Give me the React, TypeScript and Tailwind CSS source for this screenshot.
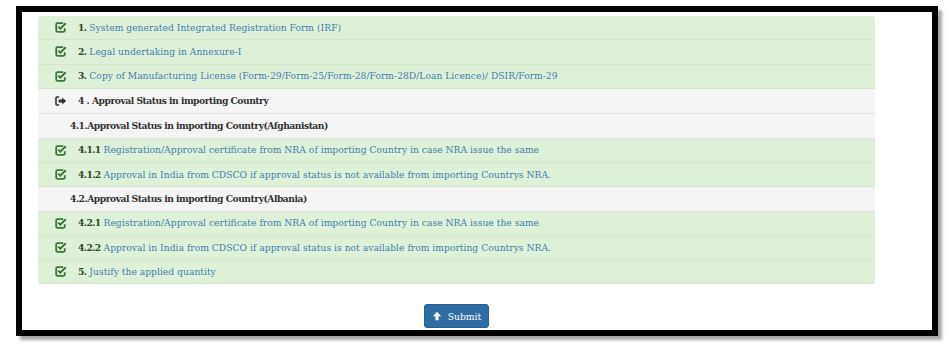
import React from 'react'

type Row =
  | { kind: 'done'; num: string; text: string }
  | { kind: 'section'; text: string }
  | { kind: 'sub'; text: string }

const rows: Row[] = [
  { kind: 'done', num: '1.', text: 'System generated Integrated Registration Form (IRF)' },
  { kind: 'done', num: '2.', text: 'Legal undertaking in Annexure-I' },
  {
    kind: 'done',
    num: '3.',
    text: 'Copy of Manufacturing License (Form-29/Form-25/Form-28/Form-28D/Loan Licence)/ DSIR/Form-29',
  },
  { kind: 'section', text: '4 . Approval Status in importing Country' },
  { kind: 'sub', text: '4.1.Approval Status in importing Country(Afghanistan)' },
  {
    kind: 'done',
    num: '4.1.1',
    text: 'Registration/Approval certificate from NRA of importing Country in case NRA issue the same',
  },
  {
    kind: 'done',
    num: '4.1.2',
    text: 'Approval in India from CDSCO if approval status is not available from importing Countrys NRA.',
  },
  { kind: 'sub', text: '4.2.Approval Status in importing Country(Albania)' },
  {
    kind: 'done',
    num: '4.2.1',
    text: 'Registration/Approval certificate from NRA of importing Country in case NRA issue the same',
  },
  {
    kind: 'done',
    num: '4.2.2',
    text: 'Approval in India from CDSCO if approval status is not available from importing Countrys NRA.',
  },
  { kind: 'done', num: '5.', text: 'Justify the applied quantity' },
]

function CheckSquare() {
  return (
    <svg width="12" height="11" viewBox="0 0 12 11" aria-hidden="true">
      <path
        d="M8.2 1.2H2.4c-.7 0-1.2.5-1.2 1.2v6.2c0 .7.5 1.2 1.2 1.2h6.2c.7 0 1.2-.5 1.2-1.2V6.2"
        fill="none"
        stroke="#3c763d"
        strokeWidth="1.8"
      />
      <path d="M3.2 4.6l2.1 2.1L10.8 1.2" fill="none" stroke="#3c763d" strokeWidth="2" />
    </svg>
  )
}

function SignOut() {
  return (
    <svg width="12" height="10" viewBox="0 0 12 10" aria-hidden="true">
      <path d="M4.2 1H2C1.4 1 1 1.4 1 2v6c0 .6.4 1 1 1h2.2" fill="none" stroke="#333" strokeWidth="1.6" />
      <path d="M3.6 3.6h3.6V1.4L11.2 5 7.2 8.6V6.4H3.6z" fill="#333" />
    </svg>
  )
}

function ListRow({ row }: { row: Row }) {
  if (row.kind === 'done') {
    return (
      <div className="flex items-center h-[24.3px] bg-[#dff0d8] border-b border-[#d3e6c9] pl-[17px]">
        <CheckSquare />
        <span className="ml-[11px] text-[#3f7fae]">
          <span className="font-bold text-[#2d4a2d] tracking-[-0.6px]">{row.num}</span> {row.text}
        </span>
      </div>
    )
  }
  if (row.kind === 'section') {
    return (
      <div className="flex items-center h-[25.5px] bg-[#f5f5f5] border-b border-[#e2e2e2] pl-[17px]">
        <SignOut />
        <span className="ml-[11px] font-bold text-[#333] tracking-[-0.5px]">{row.text}</span>
      </div>
    )
  }
  return (
    <div className="flex items-center h-[24.3px] bg-[#f5f5f5] border-b border-[#e2e2e2] pl-[32px]">
      <span className="font-bold text-[#333] tracking-[-0.5px]">{row.text}</span>
    </div>
  )
}

export default function App() {
  return (
    <div className="w-[950px] h-[352px] bg-white overflow-hidden pt-[6px] pl-[16px]">
      <div
        className="w-[922px] h-[330px] border-[6px] border-black bg-white shadow-[4px_4px_3px_rgba(0,0,0,0.35)]"
        style={{ fontFamily: '"DejaVu Serif", serif' }}
      >
        <div className="ml-[16px] mt-[4px] w-[837px] text-[9.2px]">
          <div className="rounded-[3px] overflow-hidden">
            {rows.map((r, i) => (
              <ListRow key={i} row={r} />
            ))}
          </div>
          <div className="flex justify-center mt-[20px]">
            <button
              type="button"
              className="flex items-center gap-[6px] h-[24px] px-[7px] rounded-[3px] bg-[#2e6da4] border border-[#285e8e] text-white text-[9.2px]"
            >
              <svg width="10" height="10" viewBox="0 0 12 12" aria-hidden="true">
                <path d="M6 1L1 6.2h3.1V11h3.8V6.2H11z" fill="#fff" />
              </svg>
              Submit
            </button>
          </div>
        </div>
      </div>
    </div>
  )
}
